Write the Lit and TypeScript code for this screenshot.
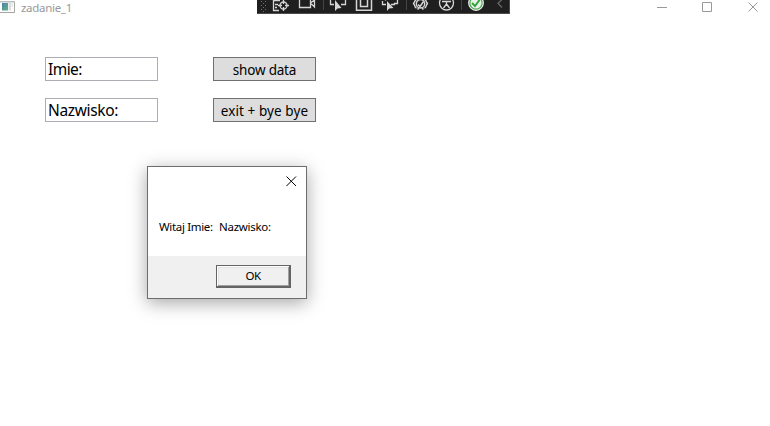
import { LitElement, html, css, svg } from "lit";
import { customElement } from "lit/decorators.js";

@customElement("debug-toolbar")
class DebugToolbar extends LitElement {
  static styles = css`
    :host { display: flex; box-sizing: border-box; width: 253px; height: 14px; background: #1f1f1f; border-bottom: 1px solid #4b4b4b; border-right: 1px solid #4b4b4b; overflow: hidden; }
    svg { display: block; flex: none; height: 13px; fill: none; stroke: #d6d6d6; stroke-width: 1.3; }
  `;
  private icon(x: number, width: number, content: unknown) {
    return html`<svg width=${width} height="13" viewBox="${x} 0 ${width} 13">${content}</svg>`;
  }
  render() {
    return html`
      ${this.icon(257, 13, svg`<g stroke="#707070" stroke-width="1" stroke-dasharray="1 3"><path d="M261.5 1V11M265.5 1V11"/><path d="M263.5 -1V12"/></g>`)}
      ${this.icon(270, 26, svg`<path d="M273.5 0V10.5H279M273 .5H280M275 4.5H278M275 7.5H277"/><circle cx="283.5" cy="5.5" r="3.5"/><path d="M283.5 0V4M283.5 7V11M278 5.5H282M285 5.5H289"/>`)}
      ${this.icon(296, 25, svg`<path d="M299.5 0V7.5H310.5V0M310.5 3L314.5 7V0L310.5 3"/>`)}
      ${this.icon(321, 6, svg`<path stroke="#444" stroke-width="1" d="M323.5 0V10"/>`)}
      ${this.icon(327, 26, svg`<path d="M330.5 0V4.5H334M341 4.5H345.5V0"/><path fill="#d6d6d6" stroke="none" d="M335 0V11L337.5 8.5L341.5 8Z"/>`)}
      ${this.icon(353, 26, svg`<path stroke-width="1.5" d="M356.5 0V10.3H371.5V0M360.5 0V6.5H367.5V0"/>`)}
      ${this.icon(379, 25, svg`<path d="M385.5 0V.5M382.5 1V4.5H386M391 4.5H394.5V3M397.5 0V3.5H394"/><path fill="#d6d6d6" stroke="none" d="M387 1V11L389.2 8.5L393.5 8Z"/>`)}
      ${this.icon(404, 6, svg`<path stroke="#444" stroke-width="1" d="M406.5 0V10"/>`)}
      ${this.icon(410, 26, svg`<path d="M416.5 -.5C414 0 415.5 3 413 3.5C415.5 4 414 7.5 416.5 8M424.5 -.5C427 0 425.5 3 428 3.5C425.5 4 427 7.5 424.5 8"/><circle cx="420.5" cy="3.8" r="4.2" stroke-width="1.4"/><path stroke-width="1.5" d="M418 4.5L420 6.5L423.5 1.5M417.5 9.5L419 8M423.5 9.5L422 8"/>`)}
      ${this.icon(436, 23, svg`<circle cx="446.5" cy="3" r="7"/><path d="M442 1.5H451M446.5 1V4M446.5 4L443.5 8M446.5 4L449.5 8"/>`)}
      ${this.icon(459, 7, svg`<path stroke="#444" stroke-width="1" d="M461.5 0V10"/>`)}
      ${this.icon(466, 24, svg`<circle cx="476" cy="3" r="7.2" fill="#e9f2e9" stroke="#ededed" stroke-width="1.4"/><circle cx="476" cy="3" r="6.1" stroke="#4eaa50" stroke-width="1.2"/><path stroke="#33a238" stroke-width="1.9" d="M472 3L475 6L479.5 0"/>`)}
      ${this.icon(490, 19, svg`<path stroke="#686868" d="M502 -.5L498 3.2L502 7.5"/>`)}
    `;
  }
}

@customElement("message-dialog")
class MessageDialog extends LitElement {
  static styles = css`
    :host { display: flex; flex-direction: column; box-sizing: border-box; width: 160px; height: 133px; border: 1px solid #6d6d6d; background: #fff; box-shadow: 0 4px 17px 0 rgba(0,0,0,.35); font: 11.5px/16px "Noto Sans", "Open Sans", sans-serif; color: #000; }
    header { display: flex; justify-content: flex-end; height: 30px; padding: 9px 9px 0 0; box-sizing: border-box; }
    svg { display: block; }
    .message { flex: 1; display: flex; padding: 22px 0 0 11px; white-space: pre; }
    .first { width: 60px; letter-spacing: -.33px; }
    .second { letter-spacing: -.27px; }
    footer { display: flex; justify-content: flex-end; height: 42px; box-sizing: border-box; padding: 9px 15px 0 0; background: #f0f0f0; }
    button { box-sizing: border-box; width: 75px; height: 23px; padding: 0; border: 1px solid #646464; border-right-width: 2px; border-bottom-width: 2px; border-radius: 0; background: #f0f0f0; font: inherit; line-height: 18px; letter-spacing: -.6px; color: #000; box-shadow: inset 1px 1px #fff, inset -1px -1px #a0a0a0, inset 2px 2px #e3e3e3; }
  `;
  render() {
    return html`
      <header><svg width="11" height="11" fill="none" stroke="#000" stroke-width="1"><path d="M.5 .5L10 10M10 .5L.5 10"/></svg></header>
      <div class="message"><span class="first">Witaj Imie:</span><span class="second">Nazwisko:</span></div>
      <footer><button>OK</button></footer>
    `;
  }
}

@customElement("app-root")
class AppRoot extends LitElement {
  static styles = css`
    :host { display: block; position: relative; width: 770px; height: 426px; overflow: hidden; background: #fff; font-family: "Noto Sans", "Open Sans", sans-serif; color: #000; }
    .titlebar { display: flex; height: 15px; align-items: flex-start; color: #999; }
    .titlebar svg { display: block; flex: none; }
    .title { margin-left: 5px; font-size: 11.5px; line-height: 16px; flex: 1; letter-spacing: -.3px; }
    .form { display: grid; grid-template-columns: 113px 103px; grid-auto-rows: 24px; gap: 17px 55px; padding: 42px 0 0 45px; }
    .field, .action { display: block; box-sizing: border-box; width: 100%; height: 24px; margin: 0; border-radius: 0; white-space: nowrap; font-family: inherit; }
    .field { border: 1px solid #abadb3; padding: 0 2px; font-size: 15.5px; line-height: 23px; letter-spacing: -.55px; }
    .wide { letter-spacing: -.35px; }
    .action { border: 1px solid #707070; background: #ddd; padding: 2px 0 0; font-size: 13.5px; line-height: 20px; letter-spacing: -.2px; color: #000; }
    .tight { letter-spacing: .08px; }
    .tools { position: absolute; left: 257px; top: 0; }
    .dialog { position: absolute; left: 147px; top: 166px; }
  `;
  render() {
    return html`
      <div class="titlebar">
        <svg width="16" height="14"><defs><linearGradient id="g" x2="1" y2="1"><stop stop-color="#4c80b4"/><stop offset="1" stop-color="#61b67a"/></linearGradient></defs><path fill="#fff" stroke="#a5a5a5" d="M-.5 1.5H14.5V12.5H-.5Z"/><path fill="#bcbcbc" d="M0 1H15V2.5H0Z"/><path fill="url(#g)" d="M2 3H8V10.5H2Z"/><path fill="#ddd" d="M8.5 3H11V10.5H8.5Z"/><path fill="#e0e8e2" d="M11.5 3H13V7H11.5Z"/></svg>
        <span class="title">zadanie_1</span>
        <svg width="114" height="15" fill="none" stroke="#999"><path d="M1 7.5H11M46.5 2.5H55.5V11.5H46.5ZM92.5 2.5L101.5 11.5M101.5 2.5L92.5 11.5"/></svg>
      </div>
      <div class="form">
        <div class="field">Imie:</div><button class="action">show data</button>
        <div class="field wide">Nazwisko:</div><button class="action tight">exit + bye bye</button>
      </div>
      <debug-toolbar class="tools"></debug-toolbar>
      <message-dialog class="dialog"></message-dialog>
    `;
  }
}
